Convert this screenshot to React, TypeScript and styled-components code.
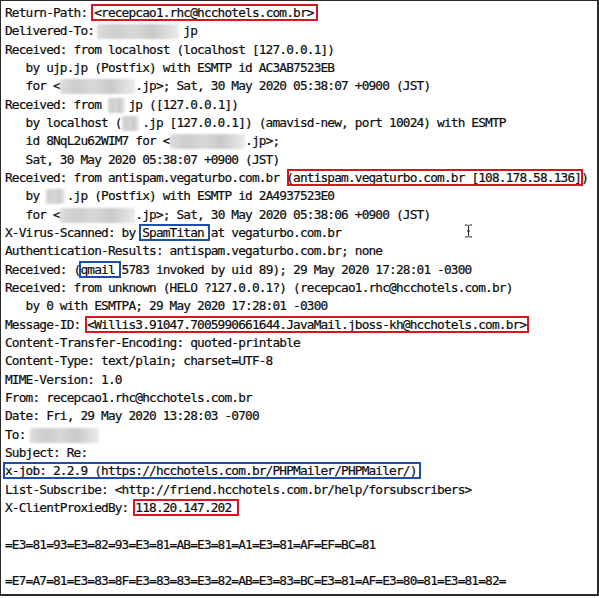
import React from "react";
import styled, { createGlobalStyle } from "styled-components";

const CW = 6.86;

const Global = createGlobalStyle`
  html, body { margin: 0; padding: 0; background: #ffffff; }
  body { width: 599px; height: 598px; overflow: hidden; }
`;

const Frame = styled.div`
  box-sizing: border-box;
  width: 599px;
  height: 596px;
  border-top: 1px solid #2a2a2a;
  border-left: 1px solid #2a2a2a;
  border-right: 2px solid #2a2a2a;
  border-bottom: 2px solid #2a2a2a;
  background: #ffffff;
  overflow: hidden;
  position: relative;
  padding: 3px 0 0 4px;
`;

const Lines = styled.div`
  display: flex;
  flex-direction: column;
  font-family: "DejaVu Sans Mono", "Liberation Mono", monospace;
  font-size: 12.8px;
  letter-spacing: -0.846px;
  line-height: 18.33px;
  color: #0d0d0d;
  -webkit-text-stroke: 0.2px #0d0d0d;
`;

const Line = styled.div`
  white-space: pre;
  height: 18.33px;
`;

const Blur = styled.span<{ $n: number; $shift?: number; $trim?: number }>`
  display: inline-block;
  width: ${(p) => p.$n * CW - (p.$trim ?? 0)}px;
  margin-left: ${(p) => p.$shift ?? 0}px;
  margin-right: ${(p) => (p.$trim ?? 0) - (p.$shift ?? 0)}px;
  height: 15px;
  vertical-align: -4px;
  background: linear-gradient(
    90deg,
    #dcdcdc 0%,
    #cdcdcd 22%,
    #d8d8d8 45%,
    #c9c9c9 68%,
    #dedede 88%,
    #ececec 100%
  );
  filter: blur(0.8px);
`;

const Mark = styled.span<{
  $color: string;
  $l?: number;
  $r?: number;
  $t?: number;
  $b?: number;
}>`
  position: relative;
  &::after {
    content: "";
    position: absolute;
    left: ${(p) => -(p.$l ?? 2)}px;
    right: ${(p) => -(p.$r ?? 2)}px;
    top: ${(p) => -(p.$t ?? 1)}px;
    bottom: ${(p) => -(p.$b ?? 1)}px;
    border: 2px solid ${(p) => p.$color};
    pointer-events: none;
  }
`;

const Cursor = styled.svg`
  position: absolute;
  left: 463px;
  top: 223px;
`;

const RED = "#d8141f";
const BLUE = "#1d4fa8";

export default function App() {
  return (
    <>
      <Global />
      <Frame>
        <Lines>
          <Line>
            Return-Path: <Mark $color={RED} $l={3} $r={4}>{"<recepcao1.rhc@hcchotels.com.br>"}</Mark>
          </Line>
          <Line>
            Delivered-To: <Blur $n={12} $shift={-4} />jp
          </Line>
          <Line>Received: from localhost (localhost [127.0.0.1])</Line>
          <Line>{"   by ujp.jp (Postfix) with ESMTP id AC3AB7523EB"}</Line>
          <Line>
            {"   for <"}<Blur $n={11} />{".jp>; Sat, 30 May 2020 05:38:07 +0900 (JST)"}
          </Line>
          <Line>
            {"Received: from "}<Blur $n={3} $trim={3} />{"jp ([127.0.0.1])"}
          </Line>
          <Line>
            {"   by localhost ("}<Blur $n={3} $trim={3} />{".jp [127.0.0.1]) (amavisd-new, port 10024) with ESMTP"}
          </Line>
          <Line>
            {"   id 8NqL2u62WIM7 for <"}<Blur $n={11} />{".jp>;"}
          </Line>
          <Line>{"   Sat, 30 May 2020 05:38:07 +0900 (JST)"}</Line>
          <Line>
            {"Received: from antispam.vegaturbo.com.br ("}
            <Mark $color={RED} $l={6} $r={2}>antispam.vegaturbo.com.br [108.178.58.136]</Mark>
            {")"}
          </Line>
          <Line>
            {"   by "}<Blur $n={3} $trim={2} />{".jp (Postfix) with ESMTP id 2A4937523E0"}
          </Line>
          <Line>
            {"   for <"}<Blur $n={11} />{".jp>; Sat, 30 May 2020 05:38:06 +0900 (JST)"}
          </Line>
          <Line>
            {"X-Virus-Scanned: by "}
            <Mark $color={BLUE} $l={3} $r={-1}>{"SpamTitan "}</Mark>
            {"at vegaturbo.com.br"}
          </Line>
          <Line>Authentication-Results: antispam.vegaturbo.com.br; none</Line>
          <Line>
            {"Received: ("}
            <Mark $color={BLUE} $l={1} $r={-1}>{"qmail "}</Mark>
            {"5783 invoked by uid 89); 29 May 2020 17:28:01 -0300"}
          </Line>
          <Line>Received: from unknown (HELO ?127.0.0.1?) (recepcao1.rhc@hcchotels.com.br)</Line>
          <Line>{"   by 0 with ESMTPA; 29 May 2020 17:28:01 -0300"}</Line>
          <Line>
            {"Message-ID: "}
            <Mark $color={RED} $l={2} $r={3}>
              {"<Willis3.91047.7005990661644.JavaMail.jboss-kh@hcchotels.com.br>"}
            </Mark>
          </Line>
          <Line>Content-Transfer-Encoding: quoted-printable</Line>
          <Line>Content-Type: text/plain; charset=UTF-8</Line>
          <Line>MIME-Version: 1.0</Line>
          <Line>From: recepcao1.rhc@hcchotels.com.br</Line>
          <Line>Date: Fri, 29 May 2020 13:28:03 -0700</Line>
          <Line>
            {"To: "}<Blur $n={10} $shift={-2} />
          </Line>
          <Line>Subject: Re:</Line>
          <Line>
            <Mark $color={BLUE} $l={2} $r={4}>
              {"x-job: 2.2.9 (https://hcchotels.com.br/PHPMailer/PHPMailer/)"}
            </Mark>
          </Line>
          <Line>{"List-Subscribe: <http://friend.hcchotels.com.br/help/forsubscribers>"}</Line>
          <Line>
            {"X-ClientProxiedBy: "}
            <Mark $color={RED} $l={2} $r={1}>{"118.20.147.202 "}</Mark>
          </Line>
          <Line>{" "}</Line>
          <Line>=E3=81=93=E3=82=93=E3=81=AB=E3=81=A1=E3=81=AF=EF=BC=81</Line>
          <Line>{" "}</Line>
          <Line>=E7=A7=81=E3=83=8F=E3=83=83=E3=82=AB=E3=83=BC=E3=81=AF=E3=80=81=E3=81=82=</Line>
          <Line>=E3=81=AA=E3=81=8F=E3=81=AF=E3=82=A4=E3=82=9A=E3=82=A6=E3=83=BC=E3=83=86</Line>
        </Lines>
        <Cursor width="9" height="14" viewBox="0 0 9 14" aria-hidden="true">
          <path
            d="M1 1 H3.5 L4.5 2 L5.5 1 H8 M4.5 2 V12 M1 13 H3.5 L4.5 12 L5.5 13 H8 M3 7 H6"
            fill="none"
            stroke="#222"
            strokeWidth="1"
          />
        </Cursor>
      </Frame>
    </>
  );
}
